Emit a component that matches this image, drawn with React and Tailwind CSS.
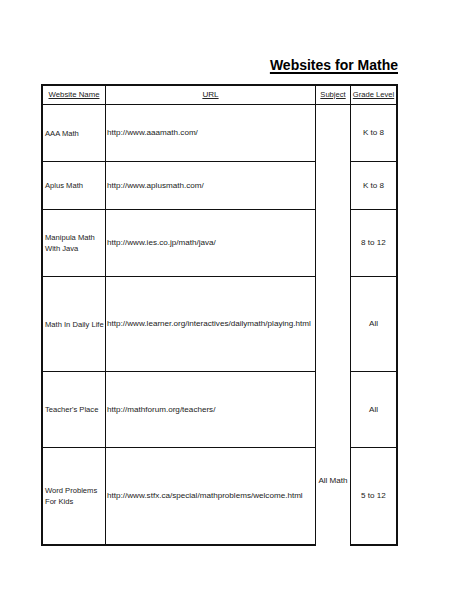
import React from 'react';

const rows = [
  { name: ['AAA Math'], url: 'http://www.aaamath.com/', grade: 'K to 8' },
  { name: ['Aplus Math'], url: 'http://www.aplusmath.com/', grade: 'K to 8' },
  { name: ['Manipula Math', 'With Java'], url: 'http://www.ies.co.jp/math/java/', grade: '8 to 12' },
  { name: ['Math In Daily Life'], url: 'http://www.learner.org/interactives/dailymath/playing.html', grade: 'All' },
  { name: ["Teacher's Place"], url: 'http://mathforum.org/teachers/', grade: 'All' },
  { name: ['Word Problems', 'For Kids'], url: 'http://www.stfx.ca/special/mathproblems/welcome.html', grade: '5 to 12' },
];

const App = () => {
  return (
    <div
      className="w-[474px] h-[613px] bg-white text-[#222] overflow-hidden"
      style={{ fontFamily: '"Liberation Sans", Arial, sans-serif' }}
    >
      {/* Title */}
      <div className="w-[398px] pt-[57px] flex justify-end">
        <h1 className="text-[14px] leading-[17px] font-bold text-black underline decoration-2 underline-offset-[2px]">
          Websites for Mathe
        </h1>
      </div>

      {/* Table: no bottom border under the Subject column */}
      <div className="ml-[41px] mt-[10px] w-[357px] grid grid-cols-[63px_210px_35px_45px] grid-rows-[19px_57px_48px_67px_95px_76px_98px] border-l-2 border-t-2 border-r-2 border-[#111] text-[8.1px] leading-[10px] whitespace-nowrap">
        <div className="border-r border-b border-[#111] flex items-center justify-center underline text-[7.8px]">Website Name</div>
        <div className="border-r border-b border-[#111] flex items-center justify-center underline">URL</div>
        <div className="border-r border-b border-[#111] flex items-center justify-center underline text-[7.6px]">Subject</div>
        <div className="border-b border-[#111] flex items-center justify-center underline text-[7.6px]">Grade Level</div>

        {rows.map((r, i) => {
          const last = i === rows.length - 1;
          const bottom = last ? 'border-b-2' : 'border-b';
          return (
            <React.Fragment key={r.url}>
              <div
                className={`col-start-1 border-r border-[#111] flex flex-col justify-center pl-[2px] text-[7.6px] ${bottom}`}
                style={{ gridRow: i + 2 }}
              >
                {r.name.map((n) => (
                  <span key={n} className="leading-[11px]">{n}</span>
                ))}
              </div>
              <div
                className={`col-start-2 border-r border-[#111] flex items-center pl-[1px] ${bottom}`}
                style={{ gridRow: i + 2 }}
              >
                {r.url}
              </div>
              <div
                className={`col-start-4 border-[#111] flex items-center justify-center ${bottom}`}
                style={{ gridRow: i + 2 }}
              >
                {r.grade}
              </div>
            </React.Fragment>
          );
        })}

        {/* Subject spans every row */}
        <div className="col-start-3 row-start-2 row-span-6 border-r border-[#111] flex flex-col justify-end items-center pb-[60px]">
          All Math
        </div>
      </div>
    </div>
  );
};

export default App;
